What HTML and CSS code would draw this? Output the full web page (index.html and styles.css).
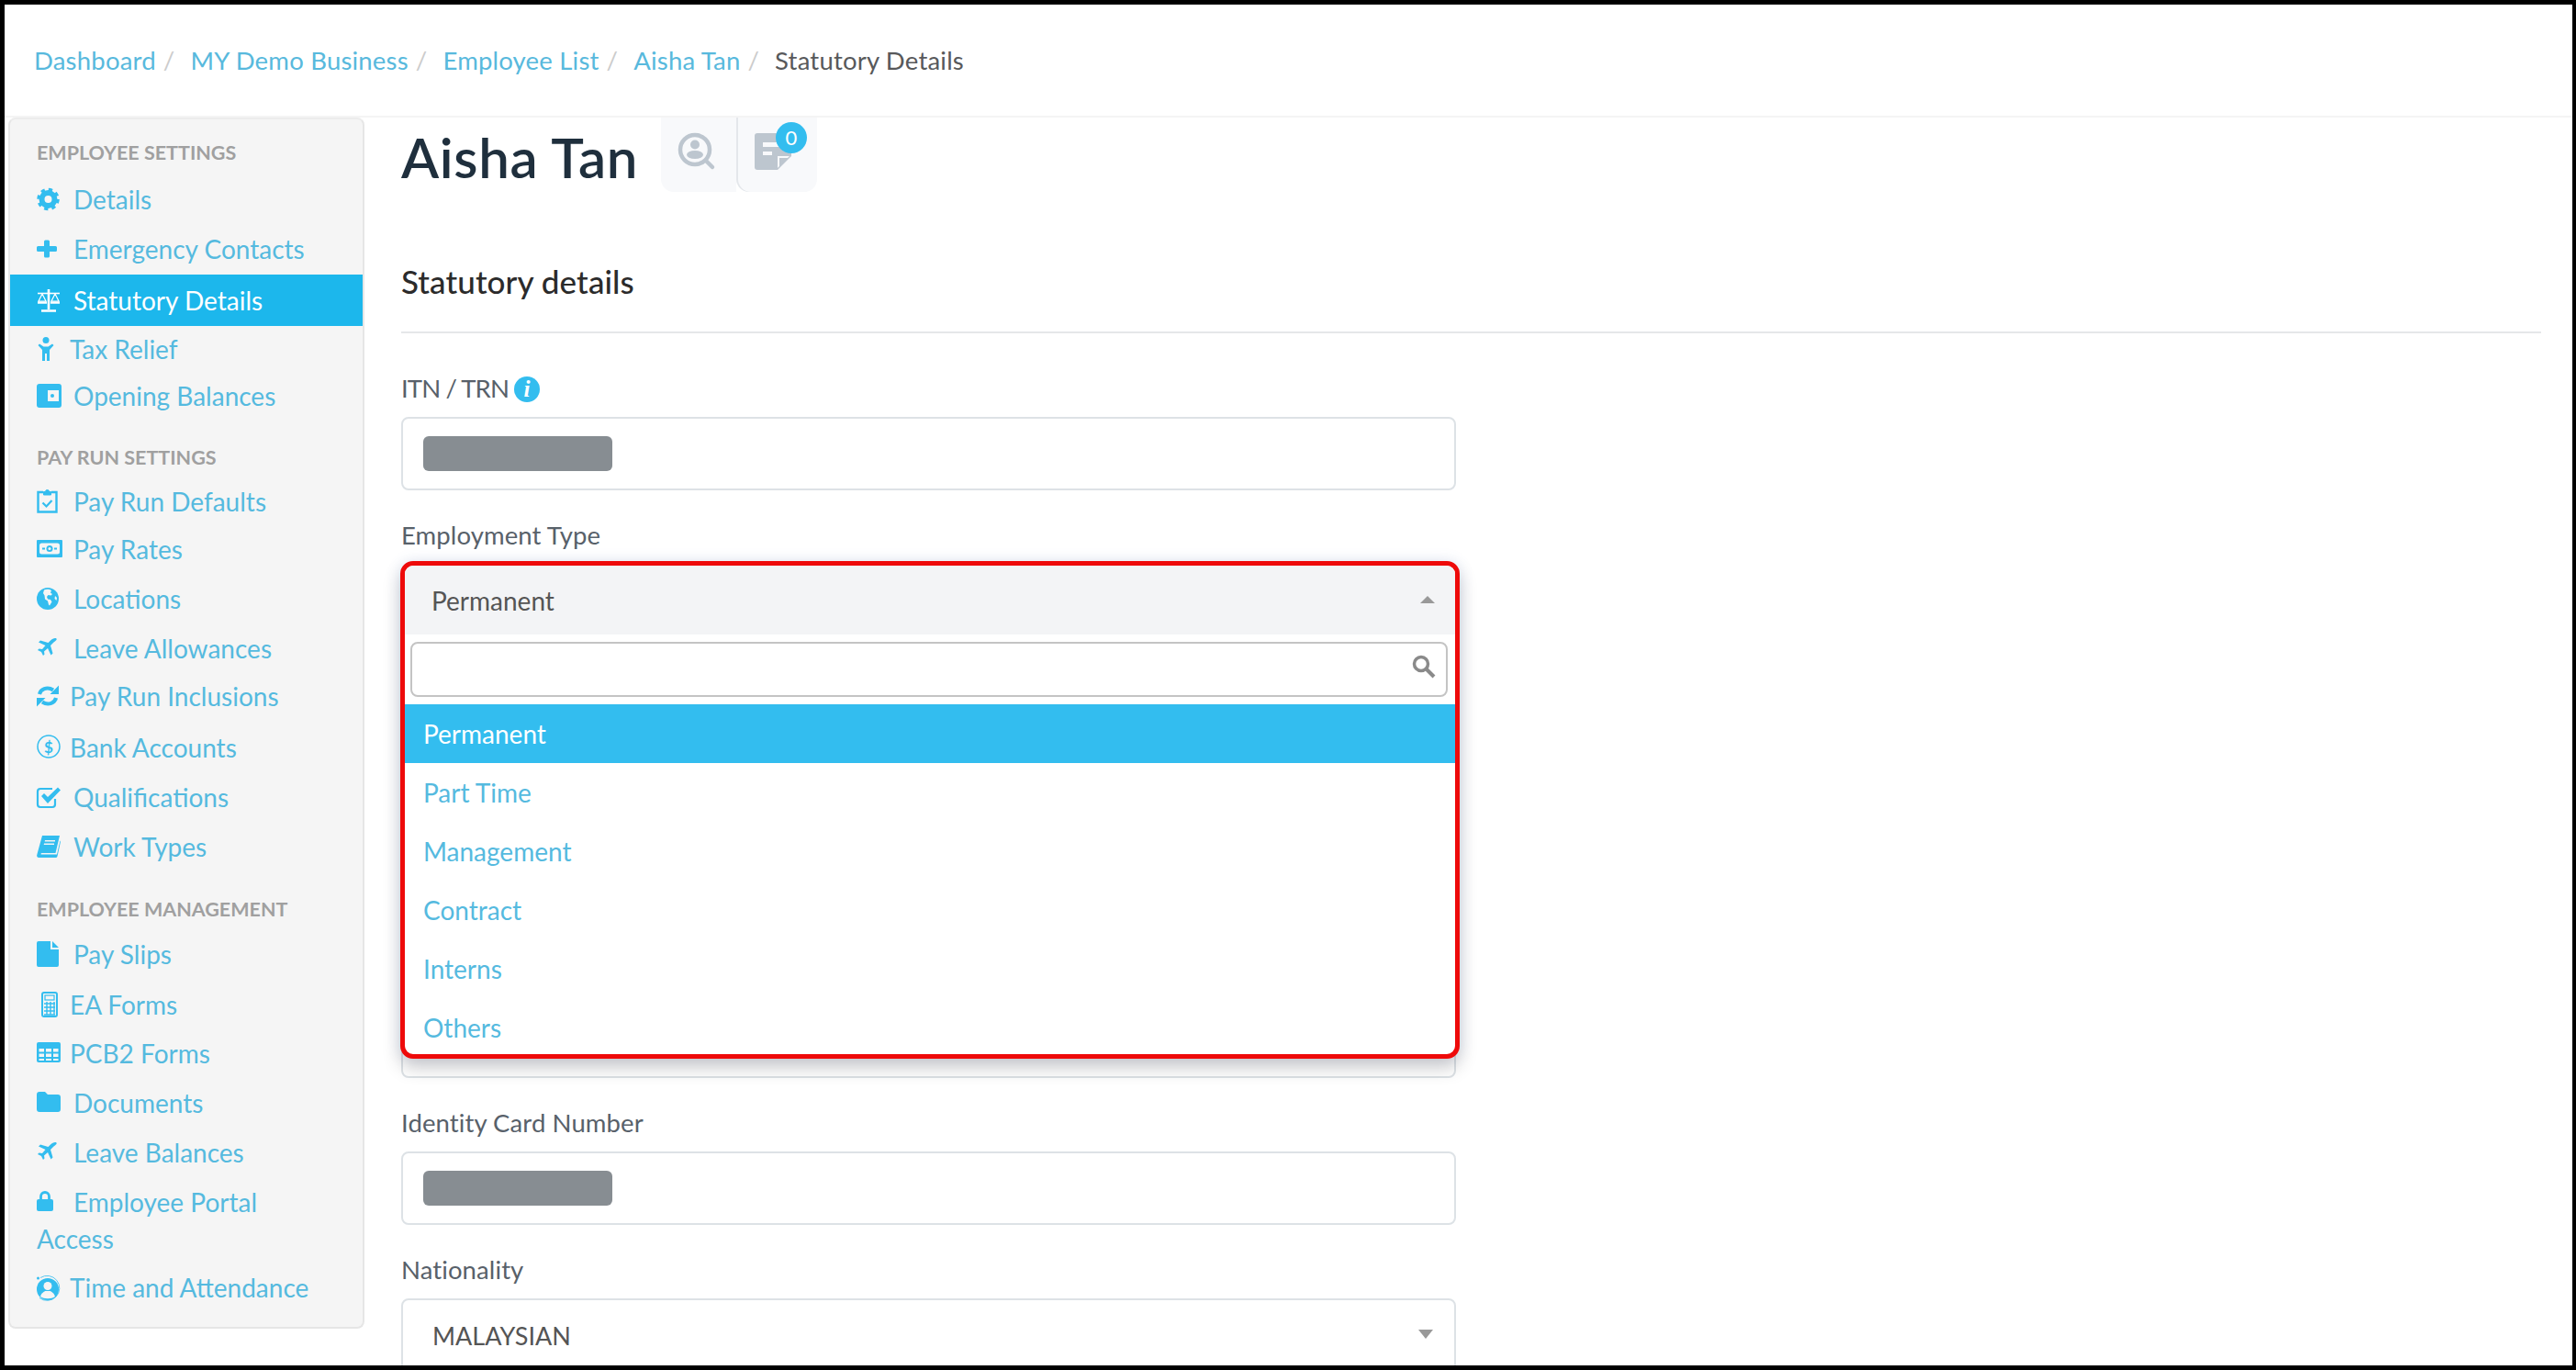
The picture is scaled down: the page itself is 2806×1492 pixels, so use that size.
FILE: index.html
```html
<!DOCTYPE html>
<html lang="en">
<head>
<meta charset="utf-8">
<title>Statutory Details</title>
<link rel="stylesheet" href="styles.css">
</head>
<body>
<div class="frame">
  <header class="topbar">
    <nav class="crumbs">
      <a>Dashboard</a><span class="sep">/</span>
      <a>MY Demo Business</a><span class="sep">/</span>
      <a>Employee List</a><span class="sep">/</span>
      <a>Aisha Tan</a><span class="sep">/</span>
      <span class="current">Statutory Details</span>
    </nav>
  </header>
  <div class="layout">
    <aside class="sidebar">
      <h4 class="sec first">EMPLOYEE SETTINGS</h4>
      <ul>
        <li class="h53"><svg class="ico line" viewBox="0 0 28 28"><circle cx="12.500" cy="14" r="7" stroke="currentColor" stroke-width="6"/><circle cx="12.500" cy="14" r="10.500" stroke="currentColor" stroke-width="3.500" stroke-dasharray="4.200 4.050"/></svg>Details</li>
        <li class="h55"><svg class="ico" viewBox="0 0 28 28"><path d="M8 6a1.500 1.500 0 0 1 1.500-1.500h3A1.500 1.500 0 0 1 14 6v5h6.500a1.500 1.500 0 0 1 1.500 1.500v3a1.500 1.500 0 0 1-1.500 1.500H14v5a1.500 1.500 0 0 1-1.500 1.500h-3A1.500 1.500 0 0 1 8 22v-5H1.500A1.500 1.500 0 0 1 0 15.500v-3A1.500 1.500 0 0 1 1.500 11H8z"/></svg>Emergency Contacts</li>
        <li class="h56 active"><svg class="ico line" viewBox="0 0 28 28" stroke="currentColor"><path d="M13 2v22M5 25.500h16" stroke-width="2.600"/><path d="M1 6.500h24" stroke-width="1.600"/><path d="M6 7 2 15h8zM20 7l-4 8h8z" stroke-width="1.200"/><path d="M1 16.500h10M15 16.500h10" stroke-width="2.400"/></svg>Statutory Details</li>
        <li class="h50"><svg class="ico narrow" viewBox="0 0 28 28"><circle cx="10" cy="4.500" r="3.500"/><path d="M1.500 10 3 8.500l4.500 3h5l4.500-3 1.500 1.500-4.500 5v12h-3v-8H9v8H6V15z"/></svg>Tax Relief</li>
        <li class="h53"><svg class="ico" viewBox="0 0 28 28"><rect y="1" width="27" height="26" rx="3"/><rect x="12" y="8" width="12" height="12" class="cut"/><circle cx="17" cy="14" r="2"/></svg>Opening Balances</li>
      </ul>
      <h4 class="sec">PAY RUN SETTINGS</h4>
      <ul>
        <li class="h52"><svg class="ico line" viewBox="0 0 28 28" stroke="currentColor"><path d="M7 4H1.500v21.500h20V4H16" stroke-width="2.400"/><path d="M7.500 7V3.500h2a2 2 0 0 1 4 0h2V7z" class="solid" stroke-width="1"/><path d="m6.500 15.500 4 4 6-6.500" stroke-width="2.200"/></svg>Pay Run Defaults</li>
        <li class="h52"><svg class="ico" viewBox="0 0 28 28"><rect y="4" width="28" height="19" rx="1"/><rect x="3" y="7.500" width="22" height="12" rx="2.500" class="cut"/><circle cx="14" cy="13.500" r="3.500"/><circle cx="14" cy="13.500" r="1.500" class="cut"/><rect x="6" y="12.500" width="3" height="2"/><rect x="19" y="12.500" width="3" height="2"/></svg>Pay Rates</li>
        <li class="h56"><svg class="ico" viewBox="0 0 28 28"><circle cx="12" cy="14" r="12"/><path class="cut" d="M8 4.500c2-1 6-1 8 .5l-1 2.500 2 1.500-1.500 1.500-3-.5-1.500 2 1 2.500 3 .5 1.500 2.500-2.500 4-1-1-1-4-3-2-.5-4-1.500-2.500zM20 11l2 2-.5 3-2-2z"/></svg>Locations</li>
        <li class="h52"><svg class="ico" viewBox="0 0 28 28"><path d="M21.500 3.500C20 2.500 17 3.500 15 5.500L12.500 8 4 5.500l-2 2L9.500 11 6 15l-3.500-.5L1 16l4 2 2 4 1.500-1.500-.5-3 4-3.500 3.500 7.500 2-2L15 11l2.500-2.500c2-2 5-3.500 4-5z"/></svg>Leave Allowances</li>
        <li class="h52"><svg class="ico narrow" viewBox="0 0 28 28"><path class="open" d="M3 12c1-5 8-9 15-4.500M21 16c-1 5-8 9-15 4.500" stroke="currentColor" stroke-width="4"/><path d="M24 2.500V12h-9.500zM0 25.500V16h9.500z"/></svg>Pay Run Inclusions</li>
        <li class="h60"><svg class="ico narrow" viewBox="0 0 28 28"><circle class="open" cx="13" cy="13" r="12" stroke="currentColor" stroke-width="1.500"/><text x="13" y="19.500" class="dollar">$</text></svg>Bank Accounts</li>
        <li class="h48"><svg class="ico" viewBox="0 0 28 28"><path class="open" d="M20 16v6a3 3 0 0 1-3 3H4a3 3 0 0 1-3-3V8a3 3 0 0 1 3-3h13" stroke="currentColor" stroke-width="2.200"/><path d="m5 13 3-3 4 4L23 3.500l3 3L12 21z"/></svg>Qualifications</li>
        <li class="h60"><svg class="ico" viewBox="0 0 28 28"><path d="M6 2h19l-4.500 19H5.500c-1 0-1.500 1.500-.5 1.500h17l3.500-15 .5 1-3.500 16a2 2 0 0 1-2 1.500H2.500C.5 26-.5 24.500.5 22z"/><path class="cut" d="M9 7h11v1.500H8.700zM8 10.500h11V12H7.700z"/></svg>Work Types</li>
      </ul>
      <h4 class="sec">EMPLOYEE MANAGEMENT</h4>
      <ul>
        <li class="h52"><svg class="ico" viewBox="0 0 28 28"><path d="M2 0h13v9h9v17a2 2 0 0 1-2 2H2a2 2 0 0 1-2-2V2a2 2 0 0 1 2-2zM17 0l7 7h-7z"/></svg>Pay Slips</li>
        <li class="h58"><svg class="ico narrow line" viewBox="0 0 28 28" stroke="currentColor"><rect x="6" y="1" width="16" height="26" rx="2" stroke-width="2"/><rect x="9" y="4" width="10" height="5" stroke-width="1.200"/><path d="M8 13h12M8 17h12M8 21h12M11 11v14M15 11v14M19 11v14M8 25h12" stroke-width="1.400"/></svg>EA Forms</li>
        <li class="h48"><svg class="ico narrow" viewBox="0 0 28 28"><rect y="2" width="26" height="22" rx="2"/><path class="cut" d="M2.500 9h5.500v3.500H2.500zM10 9h6v3.500h-6zM18 9h5.500v3.500H18zM2.500 14.500h5.500V18H2.500zM10 14.500h6V18h-6zM18 14.500h5.500V18H18zM2.500 20h5.500v2H2.500zM10 20h6v2h-6zM18 20h5.500v2H18z"/></svg>PCB2 Forms</li>
        <li class="h60"><svg class="ico" viewBox="0 0 28 28"><path d="M3 2h6l3 3h11a3 3 0 0 1 3 3v13a3 3 0 0 1-3 3H3a3 3 0 0 1-3-3V5a3 3 0 0 1 3-3z"/></svg>Documents</li>
        <li class="h48"><svg class="ico" viewBox="0 0 28 28"><path d="M21.500 3.500C20 2.500 17 3.500 15 5.500L12.500 8 4 5.500l-2 2L9.500 11 6 15l-3.500-.5L1 16l4 2 2 4 1.500-1.500-.5-3 4-3.500 3.500 7.500 2-2L15 11l2.500-2.500c2-2 5-3.500 4-5z"/></svg>Leave Balances</li>
        <li class="wrap"><svg class="ico" viewBox="0 0 28 28"><path class="open" d="M4.500 11V8a4.500 4.500 0 0 1 9 0v3" stroke="currentColor" stroke-width="2.800"/><rect y="11" width="18" height="13" rx="2"/></svg>Employee Portal Access</li>
        <li class="h66"><svg class="ico narrow" viewBox="0 0 28 28"><path class="open" d="M4 3.500a13.500 13.500 0 1 1-1 22" stroke="currentColor" stroke-width=".8"/><circle cx="12" cy="16" r="12"/><circle cx="1.500" cy="4" r="1.500"/><circle cx="12" cy="12.500" r="4.500" class="cut"/><path class="cut" d="M4 24c1-4 4-5 5-6h6c1 1 4 2 5 6-4 3-12 3-16 0z"/></svg>Time and Attendance</li>
      </ul>
    </aside>
    <main class="main">
      <div class="title-row">
        <h1 class="title">Aisha Tan</h1>
        <div class="tools">
          <div class="tool first-tool">
            <svg width="40" height="42" viewBox="0 0 40 42" class="tool-ico"><circle class="open" cx="18" cy="18" r="16" stroke="currentColor" stroke-width="4.500"/><circle cx="18" cy="12.500" r="5"/><ellipse cx="18" cy="23.500" rx="9" ry="4.500"/><path d="m30 30 7 7" stroke="currentColor" stroke-width="4.500" stroke-linecap="round"/></svg>
          </div>
          <div class="tool second-tool">
            <svg width="42" height="42" viewBox="0 0 42 42" class="tool-ico"><path d="M3 0h34a3 3 0 0 1 3 3v22L25 40H3a3 3 0 0 1-3-3V3a3 3 0 0 1 3-3z"/><path class="tool-cut" d="M9 10h20v5H9zM9 20h10v4H9zM25 38V25h13l-2 2H27v9z"/></svg>
            <span class="badge">0</span>
          </div>
        </div>
      </div>
      <h2 class="heading">Statutory details</h2>
      <form class="form">
        <div class="field">
          <label class="label"><span class="tight">ITN / TRN</span> <span class="info">i</span></label>
          <div class="control"><span class="mask"></span></div>
        </div>
        <div class="field">
          <label class="label">Employment Type</label>
          <div class="control"></div>
          <div class="popup">
            <div class="popup-head">Permanent<span class="caret-up"></span></div>
            <div class="search">
              <svg class="search-ico" width="26" height="26" viewBox="0 0 26 26"><circle class="open" cx="10" cy="10" r="7.500" stroke="currentColor" stroke-width="3.500"/><path d="m16 16 8 8" stroke="currentColor" stroke-width="4"/></svg>
            </div>
            <ul class="options">
              <li class="selected">Permanent</li>
              <li>Part Time</li>
              <li>Management</li>
              <li>Contract</li>
              <li>Interns</li>
              <li>Others</li>
            </ul>
          </div>
        </div>
        <div class="field"><div class="label"></div><div class="control"></div></div>
        <div class="field"><div class="label"></div><div class="control"></div></div>
        <div class="field"><div class="label"></div><div class="control"></div></div>
        <div class="field">
          <label class="label">Identity Card Number</label>
          <div class="control"><span class="mask"></span></div>
        </div>
        <div class="field">
          <label class="label">Nationality</label>
          <div class="control select">MALAYSIAN<span class="caret-down"></span></div>
        </div>
      </form>
    </main>
  </div>
</div>
</body>
</html>
```
FILE: styles.css
```css
* { box-sizing: border-box; }
html, body { margin: 0; height: 1492px; overflow: hidden; background: #000; }
body { font-family: "Lato", "Open Sans", sans-serif; font-size: 28px; color: #555; }
.frame { height: 1482px; margin: 5px 4px 5px 5px; background: #fff; overflow: hidden; }
.topbar { height: 123px; border-bottom: 2px solid #f4f4f4; padding-left: 32px; display: flex; align-items: center; }
.crumbs { display: flex; align-items: center; font-size: 27.500px; letter-spacing: .2px; color: #58b9dd; white-space: nowrap; }
.sep { color: #ccc; margin: 0 17px 0 8px; }
.current { color: #58595b; }
.layout { display: flex; align-items: flex-start; }
.sidebar { width: 388px; height: 1319px; margin-left: 4px; background: #f5f5f5; border: 2px solid #e6e6e6; border-top-color: #ececec; border-radius: 8px; padding: 0 14px 0 29px; color: #55badf; font-size: 28px; }
.sec { margin: 23px 0 5px; font-size: 21.500px; line-height: 34px; height: 34px; font-weight: 700; color: #a0a0a0; }
.sec.first { margin: 19px 0 8px; }
.sec + ul + .sec + ul + .sec { margin: 21px 0 6px; }
.sidebar ul { list-style: none; margin: 0; padding: 0; }
.h48 { line-height: 48px; height: 48px; }
.h50 { line-height: 50px; height: 50px; }
.h52 { line-height: 52px; height: 52px; }
.h53 { line-height: 53px; height: 53px; }
.h55 { line-height: 55px; height: 55px; }
.h56 { line-height: 56px; height: 56px; }
.h58 { line-height: 58px; height: 58px; }
.h60 { line-height: 60px; height: 60px; }
.h66 { line-height: 66px; height: 66px; }
.sidebar li.wrap { line-height: 40px; height: 80px; margin-top: 10px; padding-right: 60px; }
.sidebar li.active { background: #1cb7ec; color: #fff; margin: 0 -14px 0 -29px; padding-left: 29px; }
.ico { display: inline-block; width: 28px; height: 28px; margin-right: 12px; vertical-align: -3px; fill: #33bdef; color: #33bdef; overflow: visible; }
.ico.narrow { margin-right: 8px; }
.ico.line { fill: none; }
.active .ico { fill: #fff; color: #fff; }
.active .ico.line { fill: none; }
.solid { fill: #33bdef; }
.open { fill: none; }
.cut { fill: #f5f5f5; }
.dollar { font-size: 17px; font-family: "Lato", sans-serif; font-weight: 700; text-anchor: middle; }
.main { flex: 1; padding: 0 34px 0 40px; min-width: 0; }
.title-row { display: flex; height: 81px; }
.title { margin: 6px 0 0; font-size: 60px; line-height: 74px; font-weight: 600; color: #1f2f3d; width: 283px; letter-spacing: .7px; white-space: nowrap; }
.tools { display: flex; }
.tool { position: relative; width: 82px; height: 81px; padding: 17px 0 0 19px; background: #f8f9fb; border-radius: 0 0 0 14px; }
.second-tool { width: 86px; margin-left: 2px; padding-left: 18px; border-radius: 0 0 14px 14px; box-shadow: -2px 0 0 #e4e7eb; }
.tool-ico { display: block; fill: #bdc6cf; color: #bdc6cf; overflow: visible; }
.tool-cut { fill: #f8f9fb; }
.badge { position: absolute; left: 41px; top: 5px; width: 34px; height: 34px; border-radius: 50%; background: #33bdef; color: #fff; font-size: 22px; line-height: 34px; text-align: center; }
.heading { margin: 74px 0 0; height: 80px; line-height: 46px; font-size: 35px; font-weight: 500; color: #2b2b2b; letter-spacing: .1px; border-bottom: 2px solid #e5e7e9; }
.form { margin-top: 45px; width: 1149px; }
.field { position: relative; height: 160px; }
.label { display: block; height: 30px; line-height: 30px; margin-bottom: 16px; font-size: 27.500px; color: #58616a; letter-spacing: .1px; }
.tight { letter-spacing: -.9px; }
.control { height: 80px; border: 2px solid #dde2e6; border-radius: 8px; padding: 19px 22px; background: #fff; }
.mask { display: block; width: 206px; height: 38px; border-radius: 6px; background: #878d92; }
.info { display: inline-block; width: 28px; height: 28px; margin: 2px 0 0 -1px; border-radius: 50%; background: #33bdef; color: #fff; font-family: "Liberation Serif", serif; font-size: 25px; line-height: 28px; font-weight: 700; font-style: italic; text-align: center; vertical-align: top; }
.select { position: relative; padding: 22px 32px; line-height: 34px; font-size: 27px; color: #555; }
.caret-down { position: absolute; right: 23px; top: 32px; border: 8px solid transparent; border-top: 10px solid #999; border-bottom: 0; }
.popup { position: absolute; left: -1px; top: 43px; width: 1154px; height: 542px; border: 5px solid #ee0a0a; border-radius: 14px; background: #fff; box-shadow: 0 10px 20px rgba(0,0,0,.2), 0 0 16px rgba(90,130,220,.14); z-index: 2; }
.popup-head { position: relative; height: 75px; line-height: 76px; padding-left: 29px; background: #f3f4f6; border-radius: 9px 9px 0 0; color: #555; }
.caret-up { position: absolute; right: 22px; top: 33px; border: 8px solid transparent; border-bottom: 8px solid #999; border-top: 0; }
.search { position: relative; height: 60px; margin: 8px 8px 8px 6px; border: 2px solid #c4c4c4; border-radius: 8px; }
.search-ico { position: absolute; right: 11px; top: 12px; color: #8a8a8a; }
.options { list-style: none; margin: 0; padding: 0; color: #55badf; }
.options li { height: 64px; line-height: 64px; padding-left: 20px; }
.options .selected { background: #33bdef; color: #fff; }
```
